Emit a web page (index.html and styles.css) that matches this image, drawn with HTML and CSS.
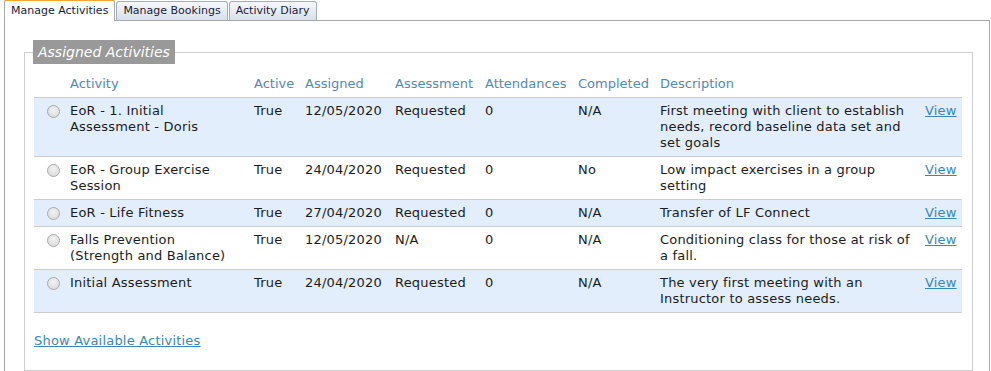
FILE: index.html
```html
<!DOCTYPE html>
<html>
<head>
<meta charset="utf-8">
<link rel="stylesheet" href="styles.css">
</head>
<body>
<div class="tabs">
  <span class="tab active">Manage Activities</span>
  <span class="tab">Manage Bookings</span>
  <span class="tab">Activity Diary</span>
</div>
<div class="panel">
  <fieldset class="box">
    <legend class="legend">Assigned Activities</legend>
    <table class="grid">
      <colgroup>
        <col class="c-radio"><col class="c-act"><col class="c-active"><col class="c-assigned"><col class="c-assess"><col class="c-att"><col class="c-comp"><col class="c-desc"><col class="c-view">
      </colgroup>
      <thead>
        <tr><th></th><th>Activity</th><th>Active</th><th>Assigned</th><th>Assessment</th><th>Attendances</th><th>Completed</th><th>Description</th><th></th></tr>
      </thead>
      <tbody>
        <tr class="alt"><td><span class="radio"></span></td><td class="name">EoR - 1. Initial Assessment - Doris</td><td>True</td><td>12/05/2020</td><td>Requested</td><td>0</td><td>N/A</td><td>First meeting with client to establish needs, record baseline data set and set goals</td><td><a class="link" href="#">View</a></td></tr>
        <tr><td><span class="radio"></span></td><td class="name">EoR - Group Exercise Session</td><td>True</td><td>24/04/2020</td><td>Requested</td><td>0</td><td>No</td><td>Low impact exercises in a group setting</td><td><a class="link" href="#">View</a></td></tr>
        <tr class="alt"><td><span class="radio"></span></td><td class="name">EoR - Life Fitness</td><td>True</td><td>27/04/2020</td><td>Requested</td><td>0</td><td>N/A</td><td>Transfer of LF Connect</td><td><a class="link" href="#">View</a></td></tr>
        <tr><td><span class="radio"></span></td><td class="name">Falls Prevention (Strength and Balance)</td><td>True</td><td>12/05/2020</td><td>N/A</td><td>0</td><td>N/A</td><td>Conditioning class for those at risk of a fall.</td><td><a class="link" href="#">View</a></td></tr>
        <tr class="alt"><td><span class="radio"></span></td><td class="name">Initial Assessment</td><td>True</td><td>24/04/2020</td><td>Requested</td><td>0</td><td>N/A</td><td>The very first meeting with an Instructor to assess needs.</td><td><a class="link" href="#">View</a></td></tr>
      </tbody>
    </table>
    <div class="more"><a class="link" href="#">Show Available Activities</a></div>
  </fieldset>
</div>
</body>
</html>
```
FILE: styles.css
```css
html, body {
  margin: 0;
  padding: 0;
  background: #fff;
  font-family: "DejaVu Sans", Verdana, sans-serif;
  color: #1c1c1c;
}
.tabs {
  display: flex;
  gap: 1px;
  padding-left: 4px;
  height: 20px;
  align-items: flex-end;
}
.tab {
  font-size: 11px;
  line-height: 16px;
  height: 17px;
  padding: 1px 6px 0;
  border: 1px solid #a3adb8;
  border-bottom: none;
  border-radius: 3px 3px 0 0;
  background: linear-gradient(#f6f8fb, #d9e0ea);
  color: #1b1b3a;
  white-space: nowrap;
}
.tab.active {
  background: #fff;
  border-color: #a9a9a9;
  border-top: 2px solid #f0a830;
  height: 20px;
  padding-top: 0;
  line-height: 19px;
  position: relative;
  top: 1px;
}
.panel {
  margin-left: 4px;
  width: 986px;
  border: 1px solid #a8a8a8;
  border-bottom: none;
  padding: 19px 16px 0 19px;
  box-sizing: border-box;
  height: 351px;
}
.box {
  margin: 0;
  border: 1px solid #cfcfcf;
  padding: 7px 9px 21px 9px;
  min-width: 0;
}
.legend {
  background: #999999;
  color: #fff;
  font-style: italic;
  font-size: 14px;
  line-height: 24px;
  padding: 0 5px;
  margin-left: -1px;
}
.grid {
  width: 928px;
  table-layout: fixed;
  border-collapse: collapse;
  font-size: 13px;
  line-height: 16px;
  letter-spacing: 0.2px;
}
.c-radio { width: 32px; }
.c-act { width: 184px; }
.c-active { width: 51px; }
.c-assigned { width: 90px; }
.c-assess { width: 90px; }
.c-att { width: 93px; }
.c-comp { width: 82px; }
.c-desc { width: 265px; }
.c-view { width: 41px; }
.grid th {
  font-weight: normal;
  color: #5389b5;
  text-align: left;
  padding: 5px 4px;
  border-bottom: 1px solid #cccccc;
  white-space: nowrap;
  letter-spacing: 0;
}
.grid td {
  vertical-align: top;
  padding: 5px 4px;
  border-bottom: 1px solid #cccccc;
}
.grid td.name { padding-right: 16px; }
.grid tr.alt td { background: #e2eefb; }
.radio {
  display: block;
  width: 11px;
  height: 11px;
  border-radius: 50%;
  border: 1px solid #a9a9a9;
  background: radial-gradient(circle at 50% 35%, #f3f3f3, #d6d6d6);
  margin: 2px 0 0 9px;
}
.link {
  color: #3a87b4;
  text-decoration: underline;
}
.more {
  margin-top: 20px;
  font-size: 13px;
  line-height: 16px;
  letter-spacing: 0.2px;
}
```
